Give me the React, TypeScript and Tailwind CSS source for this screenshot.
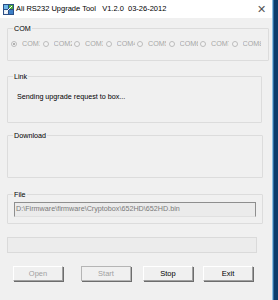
import React from 'react';

const ports = ['COM1', 'COM2', 'COM3', 'COM4', 'COM5', 'COM6', 'COM7', 'COM8'];

const AppIcon: React.FC = () => (
  <svg width="11" height="11" viewBox="0 0 11 11">
    <rect x="0" y="0" width="11" height="11" fill="#2b4f86" />
    <rect x="1" y="1" width="4" height="4" fill="#6fb7e8" />
    <rect x="6" y="1" width="4" height="4" fill="#4caa3c" />
    <rect x="1" y="6" width="4" height="4" fill="#e8eef5" />
    <rect x="6" y="6" width="4" height="4" fill="#3d7fc6" />
    <path d="M2 9 L9 2" stroke="#ffffff" strokeWidth="1" />
  </svg>
);

const Group: React.FC<{ label: string; className: string; children?: React.ReactNode }> = ({ label, className, children }) => (
  <fieldset className={`border border-[#dcdcdc] rounded-[1px] ${className}`}>
    <legend className="ml-[5px] px-[1px] text-[7.2px] leading-[9px] text-black">{label}</legend>
    {children}
  </fieldset>
);

const Button: React.FC<{ label: string; disabled?: boolean; focus?: boolean; className: string }> = ({ label, disabled, focus, className }) => (
  <div
    className={`h-[15px] w-[50px] flex items-center justify-center text-[7.5px] bg-[#f0f0f0] border ${
      focus ? 'border-[#b5b5b5]' : 'border-t-[#ffffff] border-l-[#ffffff] border-r-[#a0a0a0] border-b-[#a0a0a0]'
    } shadow-[1px_1px_0_#6d6d6d] ${disabled ? 'text-[#a0a0a0]' : 'text-black'} ${className}`}
  >
    {label}
  </div>
);

export default function App() {
  return (
    <div className="flex h-[300px] w-[278px] overflow-hidden" style={{ fontFamily: '"Liberation Sans", Arial, sans-serif' }}>
      <div className="flex flex-col w-[272px] bg-[#f0f0f0]">
        <div className="flex items-center h-[18px] bg-white pl-[3px] pr-[6px]">
          <AppIcon />
          <span className="ml-[2px] text-[7.5px] text-black whitespace-pre">Ali RS232 Upgrade Tool   V1.2.0  03-26-2012</span>
          <span className="ml-auto text-[11px] leading-none text-[#555555]">✕</span>
        </div>

        <div className="flex flex-col pl-[7px]">
          <Group label="COM" className="mt-[6px] w-[262px] h-[37px]">
            <div className="flex pl-[3px] pt-[6px]">
              {ports.map((p, i) => (
                <div key={p} className="flex items-center w-[31.5px] shrink-0 overflow-hidden">
                  <span className="w-[6px] h-[6px] shrink-0 rounded-full border border-[#bcbcbc] bg-[#f4f4f4] flex items-center justify-center">
                    {i === 0 && <span className="w-[2px] h-[2px] rounded-full bg-[#9a9a9a]" />}
                  </span>
                  <span className="ml-[5px] text-[7.2px] text-[#a7a7a7] w-[18px] overflow-hidden whitespace-nowrap">{p}</span>
                </div>
              ))}
            </div>
          </Group>

          <Group label="Link" className="mt-[11px] w-[255px] h-[51px]">
            <div className="pl-[9px] pt-[11px] text-[7.2px] text-black">Sending upgrade request to box...</div>
          </Group>

          <Group label="Download" className="mt-[8px] w-[256px] h-[47px]" />

          <Group label="File" className="mt-[12px] w-[256px] h-[34px]">
            <div className="ml-[6px] mt-[3px] w-[242px] h-[15px] flex items-center bg-[#ebebeb] border border-t-[#8e8e8e] border-l-[#8e8e8e] border-r-[#8e8e8e] border-b-[#e0e0e0] pl-[1px] text-[7.2px] text-[#7a7a7a] whitespace-nowrap overflow-hidden">
              D:\Firmware\firmware\Cryptobox\652HD\652HD.bin
            </div>
          </Group>

          <div className="mt-[13px] w-[250px] h-[16px] border border-[#dadada] bg-[#ececec]" />

          <div className="flex mt-[13px]">
            <Button label="Open" disabled className="ml-[6px]" />
            <Button label="Start" disabled focus className="ml-[18px]" />
            <Button label="Stop" className="ml-[12px]" />
            <Button label="Exit" className="ml-[10px]" />
          </div>
        </div>
      </div>
      <div className="w-[1px] bg-[#8fbfe0]" />
      <div className="w-[1px] bg-[#2f6da3]" />
      <div className="flex-1 bg-[#0d3c6b]" />
    </div>
  );
}
